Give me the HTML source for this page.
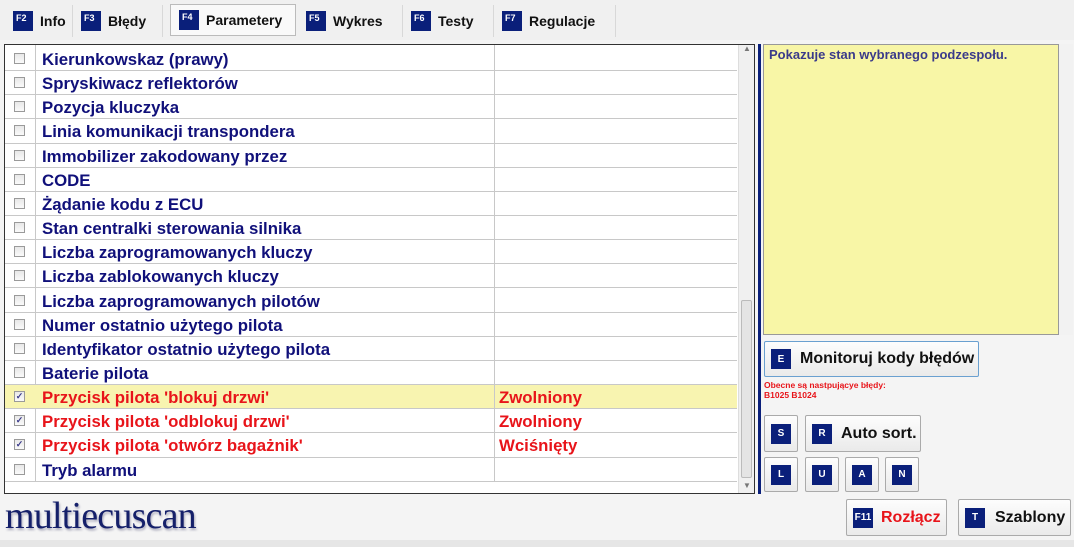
<!DOCTYPE html>
<html><head><meta charset="utf-8"><style>
*{margin:0;padding:0;box-sizing:border-box}
body{width:1074px;height:547px;background:#f4f4f4;font-family:"Liberation Sans",Arial,sans-serif;position:relative;overflow:hidden}
.a{position:absolute}
.tab{position:absolute;top:5px;height:32px;display:flex;align-items:center;font-weight:bold;font-size:14px;color:#111;border-right:1px solid #d8d8d8;padding-left:8px}
.k{display:inline-block;background:#0a1f7a;color:#fff;font-size:9px;font-weight:bold;width:20px;height:20px;line-height:14px;padding-left:3px;margin-right:7px;text-align:left}
.row{position:absolute;left:5px;width:732px;height:24.15px;border-bottom:1px solid #c8c8c8;font-weight:bold;font-size:16.8px;color:#10107a}
.row .cb{position:absolute;left:9px;top:6px;width:11px;height:11px;border:1px solid #9a9a9a;background:linear-gradient(#e8e8e8,#fafafa);font-size:9px;line-height:9px;text-align:center;color:#3a3a8a}
.row .n{position:absolute;left:37px;top:3px;white-space:nowrap}
.row .v{position:absolute;left:494px;top:3px;color:#e8141a}
.btn{position:absolute;background:linear-gradient(#fdfdfd,#eaeaea);border:1px solid #aaa;border-radius:2px;display:flex;align-items:center;font-weight:bold;color:#111}
.bk{background:#0a1f7a;color:#fff;font-size:10px;font-weight:bold;width:20px;height:20px;display:inline-flex;align-items:center;justify-content:center}
</style></head><body>
<div class="a" style="left:0;top:0;width:1074px;height:40px;background:#f0f0f0"></div>
<div class="tab" style="left:5px;width:68px"><span class="k">F2</span>Info</div>
<div class="tab" style="left:73px;width:90px"><span class="k">F3</span>Błędy</div>
<div class="tab" style="left:170px;width:126px;background:#f9f9f9;border:1px solid #bbb;top:4px"><span class="k">F4</span>Parametery</div>
<div class="tab" style="left:298px;width:105px"><span class="k">F5</span>Wykres</div>
<div class="tab" style="left:403px;width:91px"><span class="k">F6</span>Testy</div>
<div class="tab" style="left:494px;width:122px"><span class="k">F7</span>Regulacje</div>

<div class="a" style="left:4px;top:44px;width:751px;height:450px;border:1px solid #333;background:#fff"></div>
<div class="a" style="left:35px;top:45px;width:1px;height:437px;background:#c8c8c8"></div>
<div class="a" style="left:494px;top:45px;width:1px;height:437px;background:#c8c8c8"></div>
<div class="a" style="left:738px;top:45px;width:16px;height:448px;background:#f0f0f0;border-left:1px solid #ddd"></div>
<div class="a" style="left:741px;top:300px;width:11px;height:178px;background:#e4e4e4;border:1px solid #bbb;border-radius:2px"></div>
<div class="a" style="left:743px;top:44px;font-size:8px;color:#777">▲</div>
<div class="a" style="left:743px;top:481px;font-size:8px;color:#777">▼</div>

<div class="row" style="top:47px"><div class="cb"></div><div class="n">Kierunkowskaz (prawy)</div></div>
<div class="row" style="top:71.15px"><div class="cb"></div><div class="n">Spryskiwacz reflektorów</div></div>
<div class="row" style="top:95.3px"><div class="cb"></div><div class="n">Pozycja kluczyka</div></div>
<div class="row" style="top:119.45px"><div class="cb"></div><div class="n">Linia komunikacji transpondera</div></div>
<div class="row" style="top:143.6px"><div class="cb"></div><div class="n">Immobilizer zakodowany przez</div></div>
<div class="row" style="top:167.75px"><div class="cb"></div><div class="n">CODE</div></div>
<div class="row" style="top:191.9px"><div class="cb"></div><div class="n">Żądanie kodu z ECU</div></div>
<div class="row" style="top:216.05px"><div class="cb"></div><div class="n">Stan centralki sterowania silnika</div></div>
<div class="row" style="top:240.2px"><div class="cb"></div><div class="n">Liczba zaprogramowanych kluczy</div></div>
<div class="row" style="top:264.35px"><div class="cb"></div><div class="n">Liczba zablokowanych kluczy</div></div>
<div class="row" style="top:288.5px"><div class="cb"></div><div class="n">Liczba zaprogramowanych pilotów</div></div>
<div class="row" style="top:312.65px"><div class="cb"></div><div class="n">Numer ostatnio użytego pilota</div></div>
<div class="row" style="top:336.8px"><div class="cb"></div><div class="n">Identyfikator ostatnio użytego pilota</div></div>
<div class="row" style="top:360.95px"><div class="cb"></div><div class="n">Baterie pilota</div></div>
<div class="row" style="top:385.1px;background:#f8f4b0"><div class="cb">✓</div><div class="n" style="color:#e8141a">Przycisk pilota 'blokuj drzwi'</div><div class="v">Zwolniony</div></div>
<div class="row" style="top:409.25px"><div class="cb">✓</div><div class="n" style="color:#e8141a">Przycisk pilota 'odblokuj drzwi'</div><div class="v">Zwolniony</div></div>
<div class="row" style="top:433.4px"><div class="cb">✓</div><div class="n" style="color:#e8141a">Przycisk pilota 'otwórz bagażnik'</div><div class="v">Wciśnięty</div></div>
<div class="row" style="top:457.55px"><div class="cb"></div><div class="n">Tryb alarmu</div></div>
<div class="a" style="left:494px;top:385px;width:1px;height:97px;background:#c8c8c8"></div>

<div class="a" style="left:758px;top:44px;width:3px;height:450px;background:#0a1f7a"></div>
<div class="a" style="left:763px;top:44px;width:296px;height:291px;background:#f8f6a6;border:1px solid #999"></div>
<div class="a" style="left:769px;top:47px;font-size:13px;font-weight:bold;color:#3a3a8a">Pokazuje stan wybranego podzespołu.</div>
<div class="a" style="left:1059px;top:44px;width:14px;height:291px;background:#f2f2f2"></div>

<div class="btn" style="left:764px;top:341px;width:215px;height:36px;border-color:#6aa0d0;padding-left:6px;font-size:16px"><span class="bk" style="margin-right:9px">E</span>Monitoruj kody błędów</div>
<div class="a" style="left:764px;top:380px;font-size:8.5px;font-weight:bold;color:#e8141a;line-height:10px">Obecne są nastpującye błędy:<br>B1025 B1024</div>
<div class="btn" style="left:764px;top:415px;width:34px;height:37px;justify-content:center"><span class="bk">S</span></div>
<div class="btn" style="left:805px;top:415px;width:116px;height:37px;padding-left:6px;font-size:16px"><span class="bk" style="margin-right:9px">R</span>Auto sort.</div>
<div class="btn" style="left:764px;top:457px;width:34px;height:35px;justify-content:center"><span class="bk">L</span></div>
<div class="btn" style="left:805px;top:457px;width:34px;height:35px;justify-content:center"><span class="bk">U</span></div>
<div class="btn" style="left:845px;top:457px;width:34px;height:35px;justify-content:center"><span class="bk">A</span></div>
<div class="btn" style="left:885px;top:457px;width:34px;height:35px;justify-content:center"><span class="bk">N</span></div>
<div class="btn" style="left:846px;top:499px;width:101px;height:37px;padding-left:6px;font-size:16px;color:#e8141a"><span class="bk" style="margin-right:8px">F11</span>Rozłącz</div>
<div class="btn" style="left:958px;top:499px;width:113px;height:37px;padding-left:6px;font-size:16px"><span class="bk" style="margin-right:10px">T</span>Szablony</div>

<div class="a" style="left:5px;top:494px;font-family:'Liberation Serif',serif;font-size:38px;color:#15206a;text-shadow:1px 2px 2px #aab;letter-spacing:-0.8px">multiecuscan</div>
<div class="a" style="left:0;top:540px;width:1074px;height:7px;background:#e6e6e6"></div>
</body></html>
